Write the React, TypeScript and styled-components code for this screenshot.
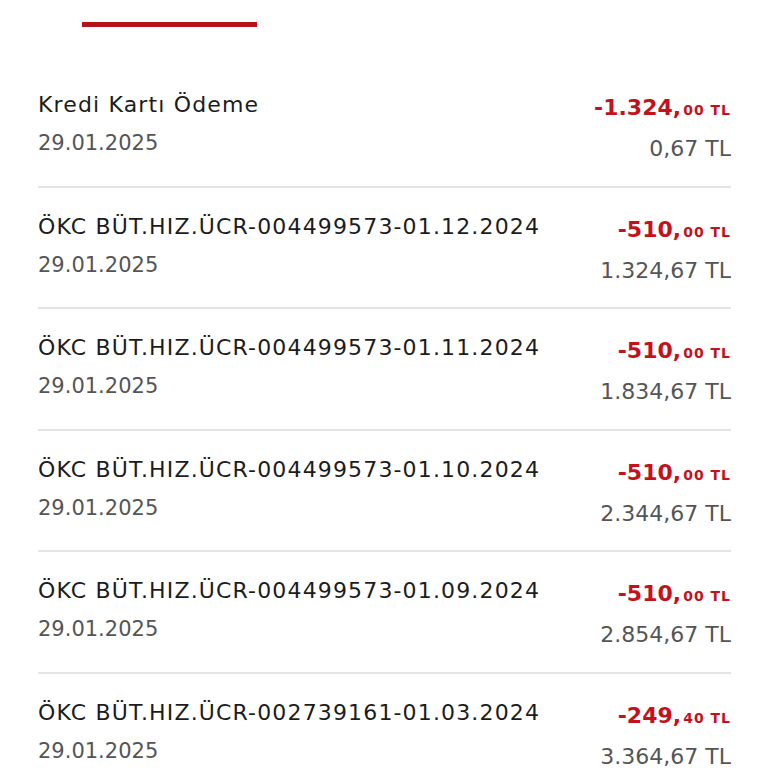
import React from "react";
import styled, { createGlobalStyle } from "styled-components";

const GlobalStyle = createGlobalStyle`
  html, body {
    margin: 0;
    padding: 0;
    background: #fff;
  }
  body {
    font-family: "DejaVu Sans", "Noto Sans", sans-serif;
    color: #1c1c1c;
  }
`;

const Page = styled.div`
  width: 768px;
  height: 768px;
  overflow: hidden;
  background: #fff;
`;

const TabBar = styled.div`
  display: flex;
  height: 27px;
  padding-left: 82px;
  align-items: flex-end;
`;

const TabIndicator = styled.div`
  width: 175px;
  height: 5px;
  background: #b5121b;
`;

const List = styled.div`
  display: flex;
  flex-direction: column;
  padding: 0 37px 0 38px;
  margin-top: 39px;
`;

const Row = styled.div`
  display: flex;
  justify-content: space-between;
  align-items: flex-start;
  padding: 24px 0 21.6px;
  border-bottom: 2px solid #e4e4e4;
`;

const Left = styled.div`
  display: flex;
  flex-direction: column;
  gap: 8px;
`;

const Title = styled.div`
  font-size: 22px;
  line-height: 30px;
  color: #1c1c1c;
  letter-spacing: 1.15px;
  white-space: nowrap;
`;

const DateText = styled.div`
  font-size: 21px;
  line-height: 30px;
  color: #555;
`;

const Right = styled.div`
  display: flex;
  flex-direction: column;
  align-items: flex-end;
  padding-top: 2px;
  gap: 10px;
`;

const Amount = styled.div`
  color: #c4121d;
  font-weight: 700;
  font-size: 22px;
  line-height: 32px;
  height: 32px;
  white-space: nowrap;
`;

const Cents = styled.span`
  font-size: 14px;
  font-weight: 700;
  line-height: 1;
  letter-spacing: 1px;
  margin-left: 2px;
`;

const Balance = styled.div`
  font-size: 22px;
  line-height: 30px;
  height: 30px;
  color: #555;
  white-space: nowrap;
`;

const rows = [
  { title: "Kredi Kartı Ödeme", amount: "-1.324,", cents: "00", balance: "0,67 TL" },
  { title: "ÖKC BÜT.HIZ.ÜCR-004499573-01.12.2024", amount: "-510,", cents: "00", balance: "1.324,67 TL" },
  { title: "ÖKC BÜT.HIZ.ÜCR-004499573-01.11.2024", amount: "-510,", cents: "00", balance: "1.834,67 TL" },
  { title: "ÖKC BÜT.HIZ.ÜCR-004499573-01.10.2024", amount: "-510,", cents: "00", balance: "2.344,67 TL" },
  { title: "ÖKC BÜT.HIZ.ÜCR-004499573-01.09.2024", amount: "-510,", cents: "00", balance: "2.854,67 TL" },
  { title: "ÖKC BÜT.HIZ.ÜCR-002739161-01.03.2024", amount: "-249,", cents: "40", balance: "3.364,67 TL" },
];

export default function App() {
  return (
    <Page>
      <GlobalStyle />
      <TabBar>
        <TabIndicator />
      </TabBar>
      <List>
        {rows.map((r, i) => (
          <Row key={i}>
            <Left>
              <Title>{r.title}</Title>
              <DateText>29.01.2025</DateText>
            </Left>
            <Right>
              <Amount>
                {r.amount}
                <Cents>{r.cents} TL</Cents>
              </Amount>
              <Balance>{r.balance}</Balance>
            </Right>
          </Row>
        ))}
      </List>
    </Page>
  );
}
